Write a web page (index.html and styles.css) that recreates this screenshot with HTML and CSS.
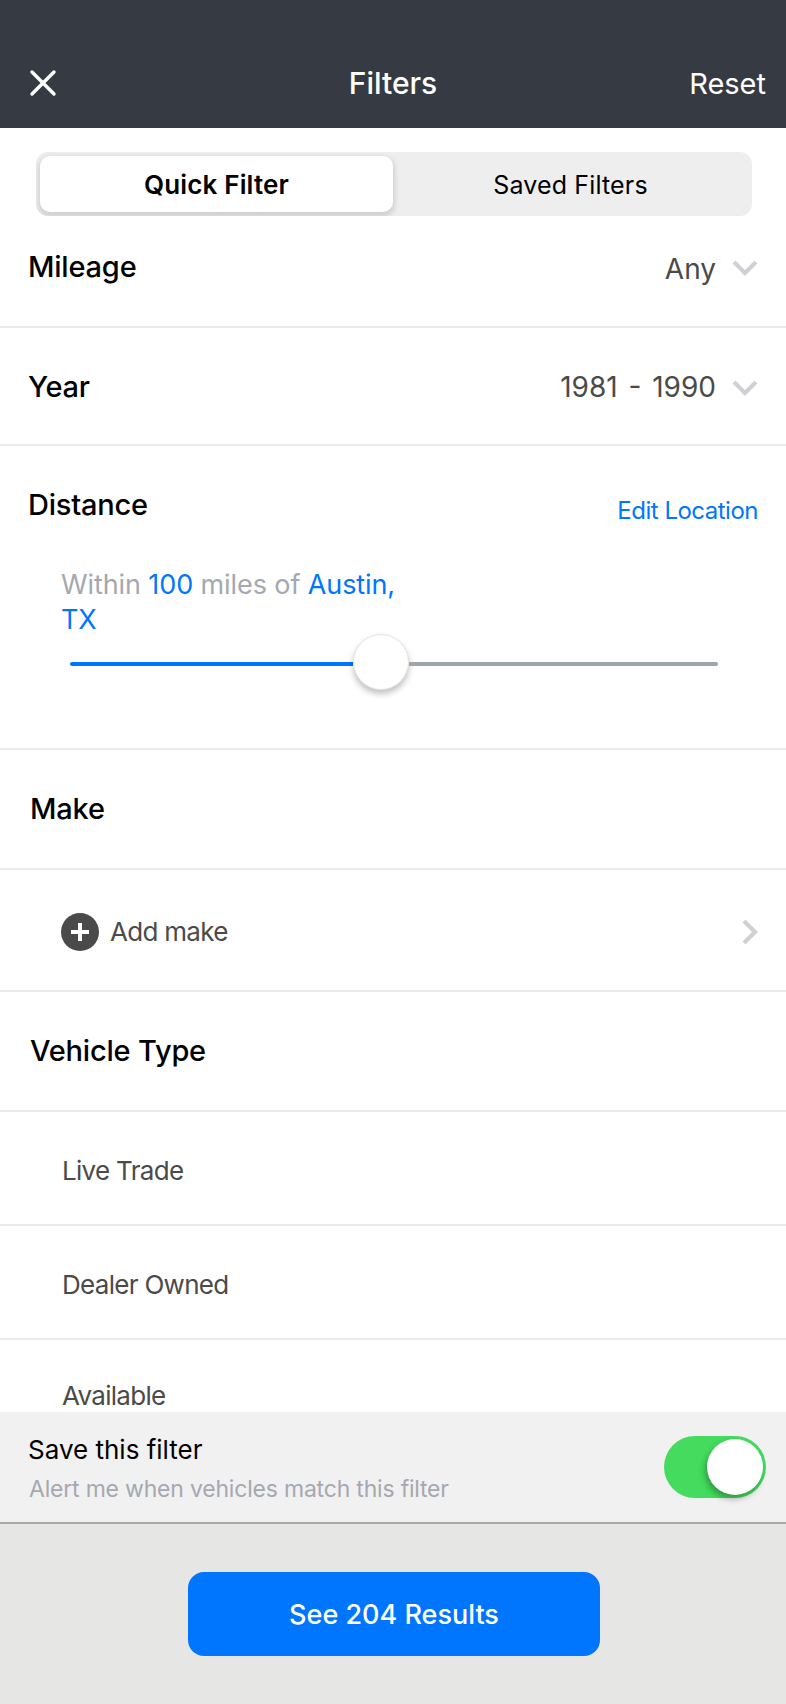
FILE: index.html
```html
<!DOCTYPE html>
<html lang="en">
<head>
  <meta charset="UTF-8" />
  <meta name="viewport" content="width=device-width, initial-scale=1.0"/>
  <title>Filters</title>
  <link rel="stylesheet" href="styles.css">
</head>
<body>
  <div class="screen">
    <header class="topbar">
      <div class="topbar-side">
        <svg class="close-icon" viewBox="0 0 28 28" width="28" height="28">
          <path d="M3 3 L25 25 M25 3 L3 25" stroke="#fff" stroke-width="3.4" stroke-linecap="round" fill="none"/>
        </svg>
      </div>
      <span class="topbar-title">Filters</span>
      <div class="topbar-side topbar-reset">Reset</div>
    </header>

    <div class="tabs">
      <div class="tab tab-active">Quick Filter</div>
      <div class="tab">Saved Filters</div>
    </div>

    <div class="filter-list">
      <div class="row row-mileage">
        <span class="row-title">Mileage</span>
        <span class="row-value">Any</span>
        <svg class="chevron-down" viewBox="0 0 26 16" width="26" height="16">
          <path d="M2 2 L13 13 L24 2" stroke="#ced0d4" stroke-width="4.2" fill="none"/>
        </svg>
      </div>
      <div class="row row-year">
        <span class="row-title">Year</span>
        <span class="row-value">1981 - 1990</span>
        <svg class="chevron-down" viewBox="0 0 26 16" width="26" height="16">
          <path d="M2 2 L13 13 L24 2" stroke="#ced0d4" stroke-width="4.2" fill="none"/>
        </svg>
      </div>

      <div class="distance">
        <div class="distance-head">
          <span class="row-title">Distance</span>
          <a class="edit-link">Edit Location</a>
        </div>
        <p class="distance-text">Within <b>100</b> miles of <b>Austin, TX</b></p>
        <div class="slider">
          <div class="slider-fill"></div>
          <div class="slider-thumb"></div>
          <div class="slider-rest"></div>
        </div>
      </div>

      <div class="row row-head"><span class="row-title">Make</span></div>
      <div class="row row-add">
        <span class="plus-icon">
          <svg viewBox="0 0 20 20" width="20" height="20">
            <path d="M10 1 V19 M1 10 H19" stroke="#fff" stroke-width="4" fill="none"/>
          </svg>
        </span>
        <span class="row-label">Add make</span>
        <svg class="chevron-right" viewBox="0 0 16 26" width="16" height="26">
          <path d="M2 2 L13 13 L2 24" stroke="#ced0d4" stroke-width="4.2" fill="none"/>
        </svg>
      </div>
      <div class="row row-head"><span class="row-title">Vehicle Type</span></div>
      <div class="row row-option"><span class="row-label">Live Trade</span></div>
      <div class="row row-option"><span class="row-label">Dealer Owned</span></div>
      <div class="row row-option row-last"><span class="row-label">Available</span></div>
    </div>

    <div class="save-panel">
      <div class="save-text">
        <div class="save-title">Save this filter</div>
        <div class="save-sub">Alert me when vehicles match this filter</div>
      </div>
      <div class="toggle"><div class="toggle-thumb"></div></div>
    </div>

    <footer class="results-bar">
      <button class="results-btn">See 204 Results</button>
    </footer>
  </div>
</body>
</html>
```

FILE: styles.css
```css
:root {
  --blue: #0076ff;
  --line: #e9ecef;
  --grey-text: #4a4a4a;
  --light-text: #a5a8b0;
}

body {
  margin: 0;
  background-color: #fff;
  font-family: Inter, 'Noto Sans', sans-serif;
  color: #000;
}

.screen {
  display: flex;
  flex-direction: column;
  width: 786px;
  height: 1704px;
  overflow: hidden;
}

.topbar {
  display: flex;
  align-items: center;
  flex: none;
  height: 128px;
  box-sizing: border-box;
  padding: 38px 20px 0;
  background-color: #363a42;
  color: #fff;
  font-size: 29px;
}

.topbar-side {
  display: flex;
  flex: 1;
}

.close-icon {
  margin-left: 9px;
}

.topbar-reset {
  justify-content: flex-end;
}

.topbar-title {
  font-size: 30px;
  font-weight: 500;
}

.tabs {
  display: flex;
  flex: none;
  height: 64px;
  box-sizing: border-box;
  margin: 24px 34px 0 36px;
  padding: 4px;
  background-color: #eeeeee;
  border-radius: 12px;
  overflow: hidden;
}

.tab {
  flex: 1;
  height: 56px;
  line-height: 58px;
  text-align: center;
  font-size: 25px;
  letter-spacing: 0.15px;
}

.tab-active {
  flex: none;
  width: 353px;
  background-color: #fff;
  border-radius: 10px;
  font-size: 26px;
  font-weight: 600;
  box-shadow: 0 3px 5px 2px rgba(0, 0, 0, 0.12);
}

.filter-list {
  flex: 1;
  min-height: 0;
  overflow: hidden;
}

.row {
  display: flex;
  box-sizing: border-box;
  padding: 0 28px;
  border-bottom: 2px solid var(--line);
}

.row-title {
  font-size: 29px;
  font-weight: 500;
  line-height: 38px;
  letter-spacing: -0.2px;
}

.row-value {
  margin-left: auto;
  font-size: 28px;
  line-height: 38px;
  word-spacing: 3px;
  color: var(--grey-text);
}

.row-label {
  font-size: 26px;
  line-height: 30px;
  letter-spacing: -0.7px;
  color: var(--grey-text);
}

.row-mileage {
  height: 112px;
  padding-top: 32px;
}

.row-mileage .row-value {
  margin-top: 2px;
}

.row-year {
  height: 118px;
  padding-top: 40px;
}

.chevron-down {
  margin: 12px 0 0 16px;
}

.distance {
  box-sizing: border-box;
  height: 304px;
  padding: 40px 28px 0;
  border-bottom: 2px solid var(--line);
}

.distance-head {
  display: flex;
  justify-content: space-between;
}

.edit-link {
  margin-top: 6px;
  font-size: 24px;
  line-height: 38px;
  letter-spacing: -0.5px;
  color: var(--blue);
}

.distance-text {
  width: 340px;
  margin: 37px 0 0 33px;
  font-size: 27px;
  line-height: 35px;
  letter-spacing: -0.1px;
  color: var(--light-text);
}

.distance-text b {
  font-weight: 400;
  color: var(--blue);
}

.slider {
  display: flex;
  align-items: center;
  width: 648px;
  margin: -3px 0 0 42px;
}

.slider-fill {
  width: 283px;
  height: 4px;
  margin-top: 4px;
  background-color: var(--blue);
  border-radius: 2px 0 0 2px;
}

.slider-rest {
  flex: 1;
  height: 4px;
  margin-top: 4px;
  background-color: #9fa5ad;
  border-radius: 0 2px 2px 0;
}

.slider-thumb {
  flex: none;
  width: 56px;
  height: 56px;
  box-sizing: border-box;
  background-color: #fff;
  border: 1px solid #e4e4e4;
  border-radius: 50%;
  box-shadow: 0 4px 6px rgba(0, 0, 0, 0.25);
}

.row-head {
  height: 120px;
  padding: 40px 30px 0;
}

.row-add {
  align-items: center;
  height: 122px;
  padding: 3px 28px 0 61px;
}

.plus-icon {
  display: flex;
  align-items: center;
  justify-content: center;
  width: 38px;
  height: 38px;
  margin-right: 11px;
  background-color: #4a4a4a;
  border-radius: 50%;
}

.chevron-right {
  margin-left: auto;
}

.row-option {
  height: 114px;
  padding: 44px 62px 0;
}

.row-last {
  height: 72px;
  padding-top: 41px;
  border-bottom: none;
}

.save-panel {
  display: flex;
  align-items: center;
  justify-content: space-between;
  flex: none;
  height: 112px;
  box-sizing: border-box;
  padding: 0 20px 0 28px;
  background-color: #f1f1f1;
  border-bottom: 2px solid #a9a9a9;
}

.save-text {
  padding-top: 4px;
}

.save-title {
  font-size: 26px;
  line-height: 38px;
}

.save-sub {
  margin: 2px 0 0 1px;
  font-size: 23px;
  line-height: 36px;
  letter-spacing: -0.2px;
  color: var(--light-text);
}

.toggle {
  display: flex;
  align-items: center;
  justify-content: flex-end;
  width: 102px;
  height: 62px;
  box-sizing: border-box;
  padding-right: 3px;
  background-color: #44db5e;
  border-radius: 31px;
}

.toggle-thumb {
  width: 56px;
  height: 56px;
  background-color: #fff;
  border-radius: 50%;
  box-shadow: -2px 4px 6px rgba(0, 0, 0, 0.3);
}

.results-bar {
  display: flex;
  justify-content: center;
  flex: none;
  height: 180px;
  box-sizing: border-box;
  padding: 48px 0 0 2px;
  background-color: #e6e6e4;
}

.results-btn {
  width: 412px;
  height: 84px;
  border: none;
  border-radius: 16px;
  background-color: var(--blue);
  color: #fff;
  font-family: inherit;
  font-size: 27px;
  font-weight: 500;
}
```
